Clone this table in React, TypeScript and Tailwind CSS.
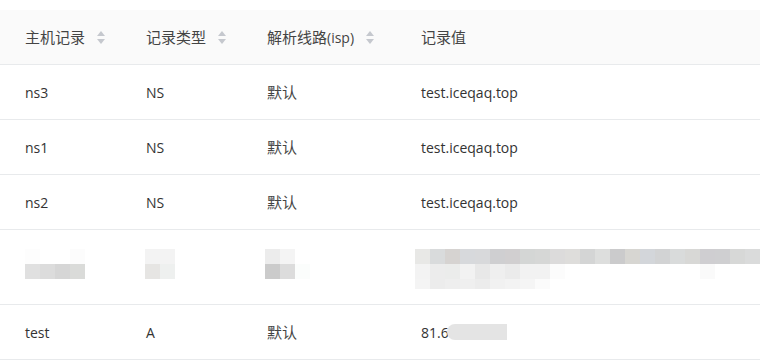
import React from "react";

const SortIcon = () => (
    <span className="inline-flex flex-col items-center ml-[12px] gap-[3px]">
        <span className="w-0 h-0 border-l-[4px] border-r-[4px] border-b-[5px] border-l-transparent border-r-transparent border-b-[#c5c8ce]" />
        <span className="w-0 h-0 border-l-[4px] border-r-[4px] border-t-[5px] border-l-transparent border-r-transparent border-t-[#c5c8ce]" />
    </span>
);

// CJK glyphs in the picture are a bit wider than the latin text
const Cjk = ({ children }: { children: React.ReactNode }) => (
    <span className="text-[15px] text-[#444]">{children}</span>
);

const rows = [
    { host: "ns3", type: "NS", line: "默认", value: "test.iceqaq.top" },
    { host: "ns1", type: "NS", line: "默认", value: "test.iceqaq.top" },
    { host: "ns2", type: "NS", line: "默认", value: "test.iceqaq.top" },
];

const Mosaic = ({ grid }: { grid: string[][] }) => (
    <div className="flex flex-col">
        {grid.map((r, i) => (
            <div key={i} className="flex">
                {r.map((c, j) => (
                    <div
                        key={j}
                        className={i === 2 ? "w-[15px] h-[10px]" : "w-[15px] h-[15px]"}
                        style={{ background: c }}
                    />
                ))}
            </div>
        ))}
    </div>
);

const valueMosaic = [
    ["#e8e8e6", "#d9dbdc", "#d6d3d1", "#d7d9dc", "#d8d9db", "#cfcfd1", "#d1cfd0", "#d4d6d5", "#d6d7d6", "#dcdbdb", "#dedddb", "#d4d5d5", "#dddedd", "#cbcbcc", "#d7d6d2", "#d3d6da", "#d2d3d4", "#d9dbdb", "#d8d8d6", "#cfced1", "#cfcfd1", "#d7d8d7", "#dadbdb"],
    ["#f3f3f3", "#ececec", "#ebeceb", "#f2f2f2", "#e8e8e8", "#efefef", "#ebebeb", "#f2f2f2", "#f2f2f2", "#fcfcfc", "#ffffff", "#ffffff", "#ffffff", "#ffffff", "#ffffff", "#ffffff", "#ffffff", "#ffffff", "#ffffff", "#fafafa", "#ffffff", "#ffffff", "#ffffff"],
    ["#f4f4f4", "#ececec", "#eeeeee", "#efefef", "#ececec", "#f1f1f1", "#f3f3f3", "#f5f5f5", "#fbfbfb"],
];

const App = () => {
    return (
        <div className="w-[760px] h-[360px] bg-white overflow-hidden pt-[10px] text-[14px] text-[#333] font-['Open_Sans','Noto_Sans_CJK_SC',sans-serif]">
            <div className="flex items-center h-[55px] bg-[#fafafa] border-b border-[#e8eaec] text-[#444]">
                <div className="w-[121px] pl-[25px] flex items-center">
                    <Cjk>主机记录</Cjk>
                    <SortIcon />
                </div>
                <div className="w-[121px] pl-[25px] flex items-center">
                    <Cjk>记录类型</Cjk>
                    <SortIcon />
                </div>
                <div className="w-[154px] pl-[25px] flex items-center">
                    <Cjk>解析线路</Cjk>(isp)
                    <SortIcon />
                </div>
                <div className="pl-[25px] flex items-center">
                    <Cjk>记录值</Cjk>
                </div>
            </div>
            {rows.map((r) => (
                <div key={r.host} className="flex items-center h-[55px] border-b border-[#e8eaec]">
                    <div className="w-[121px] pl-[25px]">{r.host}</div>
                    <div className="w-[121px] pl-[25px]">{r.type}</div>
                    <div className="w-[154px] pl-[25px]">
                        <Cjk>{r.line}</Cjk>
                    </div>
                    <div className="pl-[25px]">{r.value}</div>
                </div>
            ))}
            <div className="flex items-start h-[75px] border-b border-[#e8eaec] pt-[19px]">
                <div className="w-[120px] pl-[25px]">
                    <Mosaic grid={[["#fdfdfd", "#ffffff", "#ffffff", "#fcfcfc"], ["#e0e0e0", "#dcdcdc", "#d6d6d6", "#dadbd9"]]} />
                </div>
                <div className="w-[120px] pl-[25px]">
                    <Mosaic grid={[["#f3f3f3", "#f3f3f3"], ["#e6e5e3", "#eef0ef"]]} />
                </div>
                <div className="w-[150px] pl-[25px]">
                    <Mosaic grid={[["#ececec", "#f4f4f4", "#ffffff"], ["#cbcbcb", "#dcdcdc", "#fbfdfc"]]} />
                </div>
                <div className="pl-[25px]">
                    <Mosaic grid={valueMosaic} />
                </div>
            </div>
            <div className="flex items-center h-[55px] border-b border-[#e8eaec]">
                <div className="w-[121px] pl-[25px]">test</div>
                <div className="w-[121px] pl-[25px]">A</div>
                <div className="w-[154px] pl-[25px]">
                    <Cjk>默认</Cjk>
                </div>
                <div className="pl-[25px] flex items-center">
                    81.6
                    <span className="inline-block w-[60px] h-[16px] bg-[#e4e4e4] ml-[-2px] rounded-l-[8px]" />
                </div>
            </div>
        </div>
    );
};

export default App;
